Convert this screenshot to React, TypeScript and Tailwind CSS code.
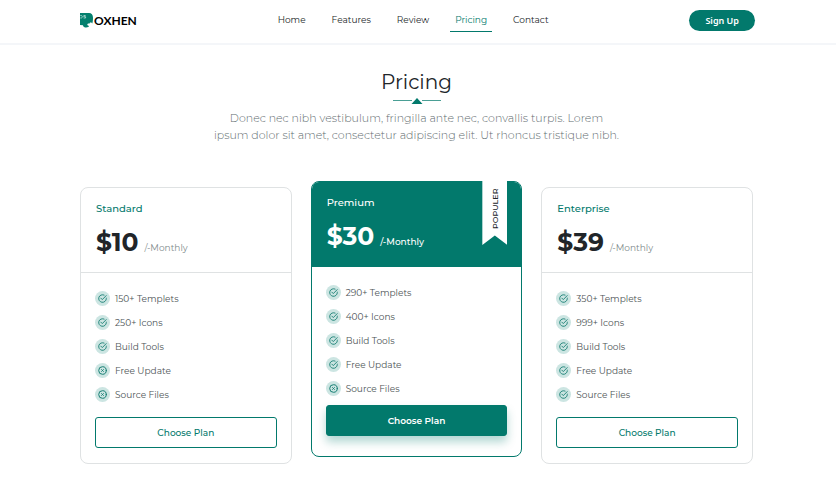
const navItems = ["Home", "Features", "Review", "Pricing", "Contact"];

type Feature = { label: string; included: boolean };

type Plan = {
  name: string;
  price: string;
  popular?: boolean;
  features: Feature[];
};

const plans: Plan[] = [
  {
    name: "Standard",
    price: "$10",
    features: [
      { label: "150+ Templets", included: true },
      { label: "250+ Icons", included: true },
      { label: "Build Tools", included: true },
      { label: "Free Update", included: false },
      { label: "Source Files", included: false },
    ],
  },
  {
    name: "Premium",
    price: "$30",
    popular: true,
    features: [
      { label: "290+ Templets", included: true },
      { label: "400+ Icons", included: true },
      { label: "Build Tools", included: true },
      { label: "Free Update", included: true },
      { label: "Source Files", included: false },
    ],
  },
  {
    name: "Enterprise",
    price: "$39",
    features: [
      { label: "350+ Templets", included: true },
      { label: "999+ Icons", included: true },
      { label: "Build Tools", included: true },
      { label: "Free Update", included: true },
      { label: "Source Files", included: true },
    ],
  },
];

function Logo() {
  return (
    <a href="#" className="flex items-center text-black">
      <svg width="14" height="15" viewBox="0 0 14 15" aria-hidden="true">
        <path
          d="M0 0H9C11.5 0 13 2 13 4.8C13 7.4 12.8 9.2 12.2 10.6L11.4 9.4L10 9.6L9.6 10.6L8 10.4L7.2 11.6L8 12.8L9.2 12.8L8.4 14C6.4 14.8 4.4 14.6 3.2 13.2L3 12.2L0 12Z"
          fill="#04806e"
        />
        <path
          d="M0.3 2.5H1.4C2.6 2.5 2.6 5 1.4 5H0.3M5.6 2.5H3.8V3.7H5.6V5H3.6"
          fill="none"
          stroke="#cfeae5"
          strokeWidth="0.7"
        />
      </svg>
      <span className="font-[Lato,sans-serif] text-[12px] leading-4 font-bold">OXHEN</span>
    </a>
  );
}

function FeatureIcon({ included }: { included: boolean }) {
  return (
    <svg width="15" height="15" viewBox="0 0 15 15" fill="none" className="shrink-0" aria-hidden="true">
      <circle cx="7.5" cy="7.5" r="7.5" fill="#cce5e2" />
      {included ? (
        <g stroke="#187f74" strokeWidth="0.9" strokeLinecap="round" strokeLinejoin="round">
          <path d="M11.3 7.1V7.5A3.8 3.8 0 1 1 9.1 4.05" />
          <path d="M5.8 7.1L7.3 8.6L11.2 4.6" />
        </g>
      ) : (
        <g stroke="#187f74" strokeLinecap="round">
          <circle cx="7.5" cy="7.5" r="3.8" />
          <path d="M6.6 6.6L8.4 8.4M8.4 6.6L6.6 8.4" />
        </g>
      )}
    </svg>
  );
}

function Ribbon() {
  return (
    <div className="absolute -top-px right-[14px] flex h-16 w-[25px] justify-center bg-white pt-1 [clip-path:polygon(0_0,100%_0,100%_100%,50%_85%,0_100%)]">
      <span className="h-[44px] rotate-180 text-[8px] leading-3 font-medium text-[#212529] [writing-mode:vertical-rl]">
        POPULER
      </span>
    </div>
  );
}

function PlanCard({ plan }: { plan: Plan }) {
  const { popular } = plan;
  return (
    <article
      className={`relative rounded-lg border bg-white ${
        popular ? "mb-[7px] border-[#02796c]" : "mt-[6px] border-[#dfe2e3]"
      }`}
    >
      <header
        className={`border-b px-[15px] pt-[13px] pb-3 ${
          popular ? "rounded-t-[7px] border-[#02796c] bg-[#02796c] text-white" : "border-[#dfe2e3]"
        }`}
      >
        <h2 className={`text-[10px] leading-4 font-medium ${popular ? "" : "text-[#02796c]"}`}>{plan.name}</h2>
        <p className="mt-2 flex items-baseline gap-[6px]">
          <span className={`text-[25px] leading-[35px] font-bold ${popular ? "" : "text-[#212529]"}`}>
            {plan.price}
          </span>
          <span className={`text-[9px] ${popular ? "font-medium" : "text-[#7f8c8d]"}`}>/-Monthly</span>
        </p>
      </header>
      {popular && <Ribbon />}
      <div className={`px-[14px] pt-[18px] ${popular ? "pb-5" : "pb-[14px]"}`}>
        <ul className="flex flex-col gap-[9px]">
          {plan.features.map((f) => (
            <li key={f.label} className="flex items-center gap-[5px] text-[9px] leading-[15px] text-[#4d5456]">
              <FeatureIcon included={f.included} />
              {f.label}
            </li>
          ))}
        </ul>
        <button
          type="button"
          className={`h-[31px] w-full rounded-[3px] border border-[#02796c] text-[9px] ${
            popular
              ? "mt-[9px] bg-[#02796c] font-semibold text-white shadow-[0_6px_10px_rgba(2,121,108,0.3)]"
              : "mt-[15px] font-medium text-[#02796c]"
          }`}
        >
          Choose Plan
        </button>
      </div>
    </article>
  );
}

export default function App() {
  return (
    <div className="min-h-screen bg-white font-[Montserrat,Inter,sans-serif] text-[#212529]">
      <header className="flex h-[45px] items-center justify-between border-b-2 border-[#f4f6f9] pr-[81px] pb-[2px] pl-20">
        <Logo />
        <nav className="flex gap-4">
          {navItems.map((item) => (
            <a
              key={item}
              href={`#${item.toLowerCase()}`}
              className={`border-b px-[5px] pt-[3px] pb-[3px] text-[9px] leading-4 ${
                item === "Pricing" ? "border-[#02796c] text-[#02796c]" : "border-transparent text-[#212529]"
              }`}
            >
              {item}
            </a>
          ))}
        </nav>
        <button
          type="button"
          className="h-[21px] rounded-full bg-[#02796c] px-4 font-['Noto_Sans',sans-serif] text-[9px] font-semibold text-white"
        >
          Sign Up
        </button>
      </header>

      <main className="pt-6 pr-[83px] pl-20">
        <section className="flex flex-col items-center text-center">
          <h1 className="text-[20px] leading-[26px]">Pricing</h1>
          <svg width="48" height="8" viewBox="0 0 48 8" className="mt-[2px]" aria-hidden="true">
            <path d="M0 3.5H19M29 3.5H48" stroke="#4a9f95" />
            <path d="M24 1L29.5 7H18.5Z" fill="#02796c" />
          </svg>
          <p className="mt-[5px] text-[11px] leading-[17px] font-light text-[#5f6d70]">
            Donec nec nibh vestibulum, fringilla ante nec, convallis turpis. Lorem
            <br />
            ipsum dolor sit amet, consectetur adipiscing elit. Ut rhoncus tristique nibh.
          </p>
        </section>

        <section className="mt-[37px] grid grid-cols-3 gap-[19px]">
          {plans.map((plan) => (
            <PlanCard key={plan.name} plan={plan} />
          ))}
        </section>
      </main>
    </div>
  );
}
